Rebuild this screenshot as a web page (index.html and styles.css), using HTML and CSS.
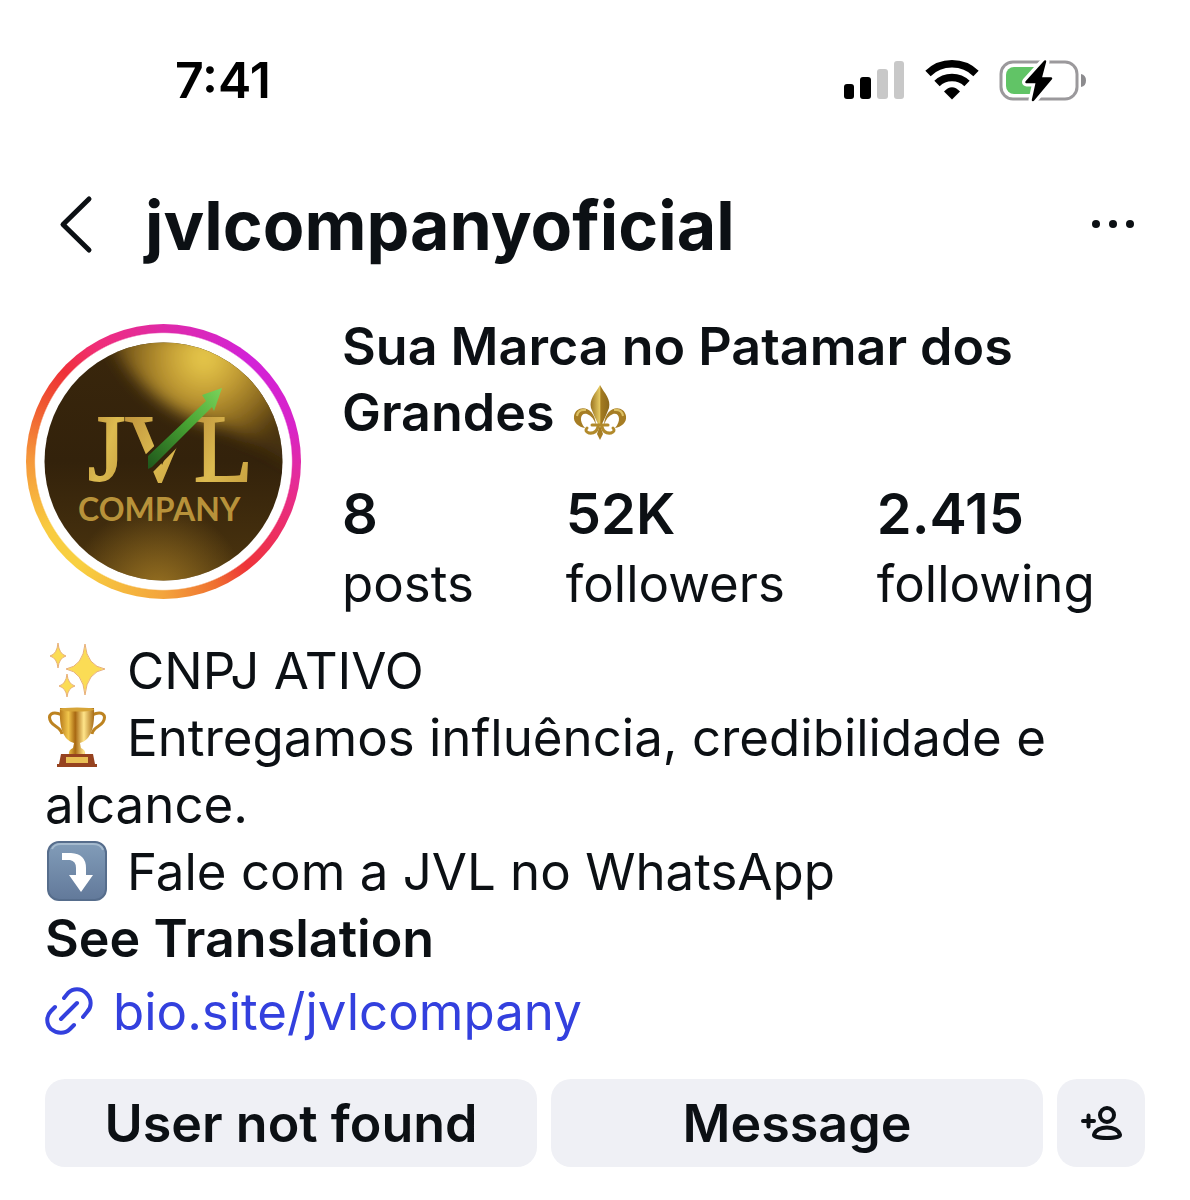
FILE: index.html
```html
<!DOCTYPE html>
<html lang="pt-BR">
<head>
<meta charset="utf-8">
<meta name="viewport" content="width=device-width, initial-scale=1">
<title>jvlcompanyoficial</title>
<link rel="stylesheet" href="styles.css">
</head>
<body>
<div class="status-bar">
  <time class="clock">7:41</time>
  <div class="status-icons">
    <svg width="62" height="40" viewBox="0 0 62 40" aria-label="Signal">
      <rect x="1" y="24" width="10" height="15" rx="3"/>
      <rect x="17" y="17" width="11" height="22" rx="3"/>
      <g fill="#c8c8c8"><rect x="34" y="9" width="11" height="30" rx="3"/><rect x="51" y="1" width="10" height="38" rx="3"/></g>
    </svg>
    <svg width="54" height="40" viewBox="0 0 54 40" aria-label="Wi-Fi">
      <g fill="none" stroke="#000" stroke-width="7.5"><path d="M3 13.500C16 .5 38 .5 51 13.500"/><path d="M12 23.500C20 15.500 34 15.500 42 23.500"/></g>
      <path d="M27 39.500L19 31.500Q27 23 35 31.500Z"/>
    </svg>
    <svg width="88" height="44" viewBox="0 0 88 44" aria-label="Battery charging">
      <rect x="2" y="4" width="76" height="37" rx="12" fill="none" stroke="#9b999c" stroke-width="3"/>
      <path d="M82 16q5 1 5 6.500t-5 6.500z" fill="#8c8b8e"/>
      <rect x="7" y="9" width="36" height="27" rx="8" fill="#61c466"/>
      <path d="M46 3.500L27.500 24H38L34 42L52 20.500H41.500Z" stroke="#fff" stroke-width="9" stroke-linejoin="round"/>
      <path d="M46 3.500L27.500 24H38L34 42L52 20.500H41.500Z" stroke="#000" stroke-width="2.500" stroke-linejoin="round"/>
    </svg>
  </div>
</div>

<header class="top-bar">
  <button class="icon-button" type="button" aria-label="Back">
    <svg width="36" height="60" viewBox="0 0 36 60" fill="none" stroke="#0c1014" stroke-width="5" stroke-linecap="round" stroke-linejoin="round"><path d="M31 4L5 29.500L31 55"/></svg>
  </button>
  <h1 class="username">jvlcompanyoficial</h1>
  <button class="icon-button" type="button" aria-label="More options">
    <svg width="44" height="12" viewBox="0 0 44 12" fill="#0c1014"><circle cx="5" cy="5" r="4"/><circle cx="22" cy="5" r="4"/><circle cx="39" cy="5" r="4"/></svg>
  </button>
</header>

<main>
  <section class="profile">
    <div class="avatar">
      <svg class="avatar-art" viewBox="18 18 239 239" role="img" aria-label="JVL Company">
        <defs>
          <radialGradient id="bottomGlow" cx=".48" cy=".98" r=".32"><stop offset="0" stop-color="#9a7322"/><stop offset="1" stop-color="#9a7322" stop-opacity="0"/></radialGradient>
          <linearGradient id="base" x1="0" y1="0" x2="0" y2="1"><stop offset="0" stop-color="#3a270c"/><stop offset=".5" stop-color="#33220b"/><stop offset="1" stop-color="#50380f"/></linearGradient>
          <radialGradient id="beam" gradientUnits="userSpaceOnUse" cx="178" cy="34" r="105"><stop offset="0" stop-color="#ecce4e"/><stop offset=".35" stop-color="#c39d34"/><stop offset=".7" stop-color="#84631d"/><stop offset="1" stop-color="#5a4012" stop-opacity=".5"/></radialGradient>
          <linearGradient id="gold" x1="0" y1="0" x2="1" y2="1"><stop offset="0" stop-color="#b98a38"/><stop offset=".5" stop-color="#dcbb50"/><stop offset="1" stop-color="#c39a3c"/></linearGradient>
          <linearGradient id="green" x1="0" y1="1" x2="1" y2="0"><stop offset="0" stop-color="#1f561b"/><stop offset=".55" stop-color="#48a433"/><stop offset="1" stop-color="#7bd35b"/></linearGradient>
          <filter id="soft" x="-30%" y="-30%" width="160%" height="160%"><feGaussianBlur stdDeviation="8"/></filter>
          <clipPath id="disc"><circle cx="137.500" cy="137.500" r="119"/></clipPath>
          <mask id="arrowCut" maskUnits="userSpaceOnUse" x="0" y="0" width="275" height="275"><rect width="275" height="275" fill="#fff"/><path d="M116 134L180 72L192 82L124 151Z" fill="#000"/><path d="M138 70H188V84L134 135Z" fill="#000"/></mask>
        </defs>
        <g clip-path="url(#disc)">
          <rect width="275" height="275" fill="url(#base)"/>
          <path d="M84 8H285V152Q240 124 200 104Q130 94 84 20Z" fill="url(#beam)" filter="url(#soft)"/>
          <rect width="275" height="275" fill="url(#bottomGlow)"/>
          <g fill="url(#gold)" stroke="url(#gold)" stroke-width="2">
            <text class="logo-serif" x="62" y="157">J</text>
            <text class="logo-serif" x="99" y="157" mask="url(#arrowCut)">V</text>
            <text class="logo-serif" x="168" y="157">L</text>
          </g>
          <path d="M122 132L180 77L176 71L196 64L188 87L186 83L126 143L122 145Z" fill="url(#green)"/>
          <text class="logo-sans" x="52" y="197">COMPANY</text>
        </g>
      </svg>
    </div>
    <div class="summary">
      <h2 class="display-name">Sua Marca no Patamar dos Grandes
        <svg class="lily" width="56" height="56" viewBox="0 0 56 56" role="img" aria-label="Fleur-de-lis">
          <defs><linearGradient id="lilyGold"><stop offset="0" stop-color="#9a7422"/><stop offset=".48" stop-color="#e4c860"/><stop offset=".55" stop-color="#a47b20"/><stop offset="1" stop-color="#8b681d"/></linearGradient></defs>
          <path d="M28 0C23 9 17 14 19 23Q22 31 26 39H30Q34 31 37 23C39 14 33 9 28 0Z" fill="url(#lilyGold)"/>
          <g fill="#a67d24"><path d="M24 40C23 20 4 19 2 31C1 38 7 42 13 43C6 35 9 27 15 29Q21 31 24 40Z"/><path d="M32 40C33 20 52 19 54 31C55 38 49 42 43 43C50 35 47 27 41 29Q35 31 32 40Z"/><path d="M28 40L25 49L28 55L31 49Z"/></g>
          <path d="M20 40H36M26 42Q24 49 17 48Q12 46 15 43M30 42Q32 49 39 48Q44 46 41 43" fill="none" stroke="#b28a2b" stroke-width="3" stroke-linecap="round"/>
          <path d="M5 31Q6 24 14 25M51 31Q50 24 42 25" fill="none" stroke="#dcc063" stroke-width="2"/>
        </svg>
      </h2>
      <ul class="stats">
        <li><strong>8</strong><span>posts</span></li>
        <li><strong>52K</strong><span>followers</span></li>
        <li><strong>2.415</strong><span>following</span></li>
      </ul>
    </div>
  </section>

  <section class="bio">
    <p><svg class="emoji" width="60" height="60" viewBox="0 0 60 60" role="img" aria-label="Sparkles">
        <g fill="#fbdc55" stroke="#e8b07a" stroke-width="1"><path d="M38 4Q40 26 58 29Q40 32 38 55Q36 32 19 29Q36 26 38 4Z"/><path d="M11 3Q12 14 19 16Q12 18 11 28Q10 18 3 16Q10 14 11 3Z"/><path d="M20 34Q21 44 28 46Q21 48 20 57Q19 48 12 46Q19 44 20 34Z"/></g>
      </svg>CNPJ ATIVO</p>
    <p><svg class="emoji" width="60" height="60" viewBox="0 0 60 60" role="img" aria-label="Trophy">
        <defs><linearGradient id="cup"><stop offset="0" stop-color="#b87b1b"/><stop offset=".25" stop-color="#f1c64c"/><stop offset=".45" stop-color="#a86812"/><stop offset=".7" stop-color="#ffe58a"/><stop offset="1" stop-color="#a76b16"/></linearGradient></defs>
        <g fill="none" stroke="#bd8320" stroke-width="3"><path d="M15 8C5 3 0 8 4 15C7 20 14 20 15 27"/><path d="M45 8C55 3 60 8 56 15C53 20 46 20 45 27"/></g>
        <path d="M13 1H47C48 20 44 33 33 36L34 41Q39 43 38 48H22Q21 43 26 41L27 36C16 33 12 20 13 1Z" fill="url(#cup)"/>
        <ellipse cx="30" cy="2.500" rx="17" ry="2" fill="#d6a437"/>
        <path d="M14 47H46L48 57H50V60H10V57H12Z" fill="#96421f"/><rect x="19" y="50" width="22" height="6" fill="#e9bf55"/>
      </svg>Entregamos influência, credibilidade e alcance.</p>
    <p><svg class="emoji" width="60" height="60" viewBox="0 0 60 60" role="img" aria-label="Arrow down">
        <defs><linearGradient id="tile" x1="0" y1="0" x2="0" y2="1"><stop offset="0" stop-color="#829db9"/><stop offset="1" stop-color="#62799a"/></linearGradient></defs>
        <rect x="1" y="1" width="58" height="58" rx="11" fill="url(#tile)" stroke="#566d8c" stroke-width="2"/><path d="M5 8Q7 3 14 3H46Q54 3 56 9" fill="none" stroke="#a5bace" stroke-width="2"/>
        <path d="M15 12H24Q39 13 39 27V34H46L34 51L22 34H29V27Q29 20 23 19H15Z" fill="#fff"/>
      </svg>Fale com a JVL no WhatsApp</p>
    <button class="translate" type="button">See Translation</button>
    <a class="bio-link" href="https://bio.site/jvlcompany">
      <svg width="48" height="48" viewBox="0 0 48 48" fill="none" stroke="#3340de" stroke-width="4" stroke-linecap="round"><path d="M19 11L23 6C28 1 36 1 41 6C47 12 47 20 42 25L38 30"/><path d="M10 20L6 24C1 29 1 37 6 42C12 47 20 47 25 42L29 38"/><path d="M16 32L32 16"/></svg>
      <span>bio.site/jvlcompany</span>
    </a>
  </section>

  <div class="actions">
    <button class="action" type="button">User not found</button>
    <button class="action" type="button">Message</button>
    <button class="action action-icon" type="button" aria-label="Suggested people">
      <svg width="42" height="36" viewBox="0 0 42 36" fill="none" stroke="#0c1014" stroke-width="4" stroke-linecap="round" stroke-linejoin="round"><path d="M3 16H14M8.500 10.500V21.500"/><circle cx="27" cy="10" r="7"/><path d="M14 30C16 20 38 20 40 30C40 34 14 34 14 30Z"/></svg>
    </button>
  </div>
</main>
</body>
</html>
```
FILE: styles.css
```css
* { box-sizing: border-box; }
body { margin: 0; background: #fff; color: #0c1014; font-family: Inter, "Liberation Sans", sans-serif; font-size: 51px; line-height: 67px; }
h1, h2, p, ul { margin: 0; padding: 0; }
button { border: 0; padding: 0; background: none; color: inherit; font: inherit; cursor: pointer; }
svg { display: block; flex: none; }

.status-bar { display: flex; justify-content: space-between; align-items: center; height: 160px; padding: 0 103px 0 175px; }
.clock { color: #000; font-size: 50px; font-weight: 600; }
.status-icons { display: flex; align-items: center; gap: 20px; }

.top-bar { display: flex; align-items: center; height: 130px; padding: 0 55px 0 58px; }
.username { flex: 1; margin-left: 51px; font-size: 68px; font-weight: 700; line-height: 84px; }

.profile { display: flex; gap: 41px; padding: 24px 26px 0; }
.avatar { flex: none; width: 275px; height: 275px; margin-top: 10px; padding: 18px; border-radius: 50%;
  background: radial-gradient(closest-side, #fff 93%, transparent 94%), conic-gradient(#df2aa8, #d222d8 40deg, #d824c8 75deg, #e62c94 100deg, #ed2f5c 125deg, #ee3438 142deg, #ef7030 157deg, #f3a43c 180deg, #f8d040 220deg, #f8cb40 240deg, #f5953a 272deg, #ef5530 296deg, #ef3038 312deg, #f02d78 330deg, #df2aa8); }
.avatar-art { width: 100%; height: 100%; }
.logo-serif { font: 96px "Liberation Serif", serif; }
.logo-sans { font: 700 32px Lato, sans-serif; fill: #b8923a; }

.summary { flex: 1; }
.display-name { font-size: 52px; font-weight: 600; line-height: 66px; }
.lily { display: inline-block; margin-left: 4px; vertical-align: -10px; }
.stats { display: flex; gap: 92px; margin-top: 33px; list-style: none; }
.stats li { display: flex; flex-direction: column; line-height: 70px; }
.stats strong { font-size: 56px; font-weight: 600; }

.bio { padding: 18px 45px 0; }
.emoji { display: inline-block; margin: 0 20px 0 2px; vertical-align: -11px; }
.translate { display: block; font-size: 52px; font-weight: 600; }
.bio-link { display: flex; align-items: center; gap: 20px; height: 78px; color: #3340de; text-decoration: none; }

.actions { display: flex; gap: 14px; padding: 29px 45px 33px; }
.action { display: flex; flex: 1; align-items: center; justify-content: center; height: 88px; border-radius: 20px; background: #eff0f5; font-size: 52px; font-weight: 600; }
.action-icon { flex: 0 0 88px; }
```
